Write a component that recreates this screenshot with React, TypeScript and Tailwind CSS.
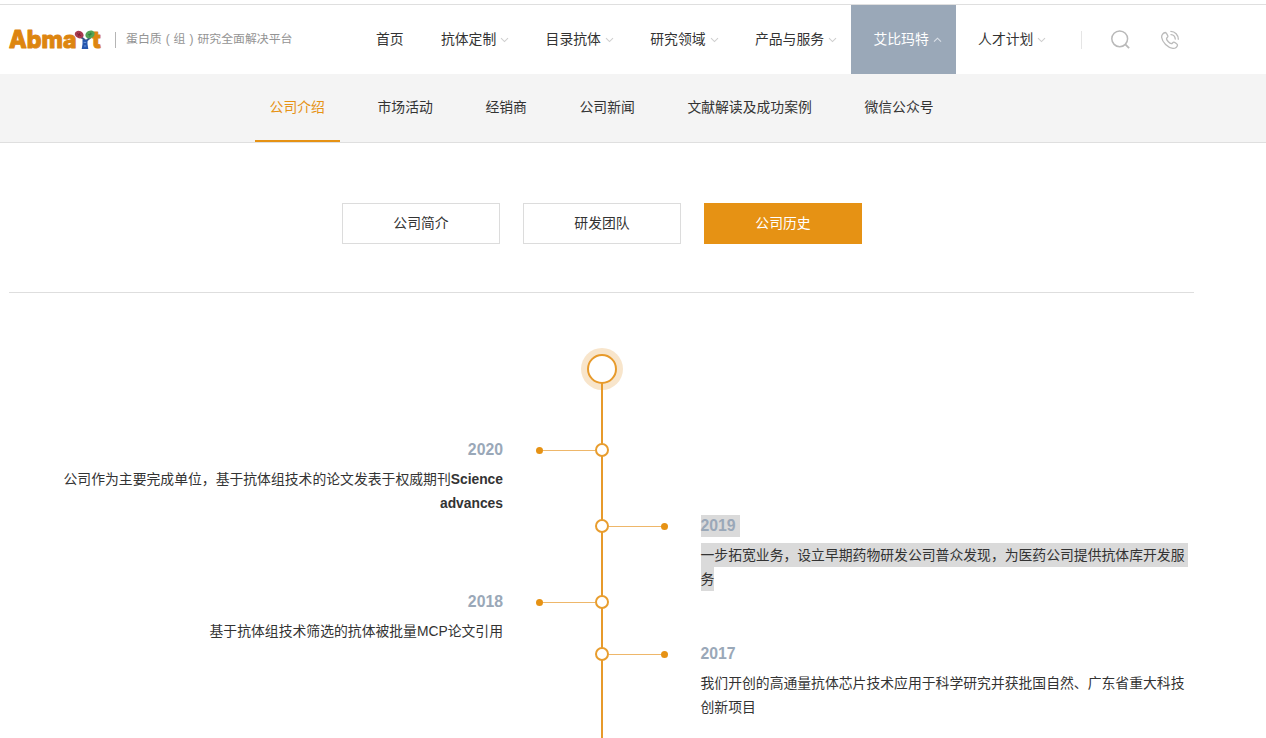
import React from "react";
import clsx from "clsx";

interface NavItem {
  label: string;
  menu?: boolean;
  active?: boolean;
}

interface TimelineEntry {
  year: string;
  side: "left" | "right";
  lines: React.ReactNode[];
  selected?: boolean;
}

const navItems: NavItem[] = [
  { label: "首页" },
  { label: "抗体定制", menu: true },
  { label: "目录抗体", menu: true },
  { label: "研究领域", menu: true },
  { label: "产品与服务", menu: true },
  { label: "艾比玛特", menu: true, active: true },
  { label: "人才计划", menu: true },
];

const subItems = ["公司介绍", "市场活动", "经销商", "公司新闻", "文献解读及成功案例", "微信公众号"];

const tabs = ["公司简介", "研发团队", "公司历史"];

const entries: TimelineEntry[] = [
  {
    year: "2020",
    side: "left",
    lines: [
      <>
        公司作为主要完成单位，基于抗体组技术的论文发表于权威期刊<b>Science</b>
      </>,
      <b>advances</b>,
    ],
  },
  {
    year: "2019",
    side: "right",
    selected: true,
    lines: ["一步拓宽业务，设立早期药物研发公司普众发现，为医药公司提供抗体库开发服", "务"],
  },
  { year: "2018", side: "left", lines: ["基于抗体组技术筛选的抗体被批量MCP论文引用"] },
  {
    year: "2017",
    side: "right",
    lines: ["我们开创的高通量抗体芯片技术应用于科学研究并获批国自然、广东省重大科技", "创新项目"],
  },
];

const Logo = () => (
  <svg width="96" height="36" viewBox="0 -4 96 36" className="shrink-0">
    <g
      fill="#dd8510"
      stroke="#dd8510"
      strokeWidth="1"
      strokeLinejoin="round"
      fontFamily="Inter, sans-serif"
      fontWeight="800"
      fontSize="24"
    >
      <text x="1" y="22.2" textLength="67.5" lengthAdjust="spacingAndGlyphs">Abma</text>
      <text x="84" y="22.2" textLength="8.800" lengthAdjust="spacingAndGlyphs">t</text>
    </g>
    {/* antibody figure standing in for the "r" */}
    <path d="M73 11l5 4M83 11l-5 4" stroke="#3a5a8a" strokeWidth="2.2" />
    <ellipse cx="71.2" cy="8.6" rx="4.6" ry="3.6" fill="#a83a4e" transform="rotate(25 71.2 8.6)" />
    <ellipse cx="82" cy="8.4" rx="4.8" ry="3.8" fill="#54a355" transform="rotate(-25 82 8.4)" />
    <path d="M69 7.6l4 2M70.4 10.4l1.6-3.6" stroke="#7a2036" strokeWidth="0.9" />
    <path d="M80 8.8l4.2-1M81.6 10.6l1-4" stroke="#2f7a3c" strokeWidth="0.9" />
    <path d="M74.500 14h5v4l.8 5h-6.600l.8-5z" fill="#2456ad" />
    <path d="M75.6 16.4h2.6M76 20h2.2" stroke="#7ba6e6" strokeWidth="0.8" />
  </svg>
);

const Chevron = ({ up }: { up?: boolean }) => (
  <svg
    width="9"
    height="6"
    viewBox="0 0 9 6"
    fill="none"
    stroke={up ? "#dbe1e8" : "#cfcfcf"}
    strokeWidth="1.1"
    className="ml-1 shrink-0"
  >
    <path d={up ? "M1 4.6L4.5 1.2L8 4.6" : "M1 1.2L4.5 4.6L8 1.2"} />
  </svg>
);

const SearchIcon = () => (
  <svg width="20" height="20" viewBox="0 0 20 20" fill="none" stroke="#b9b9b9" strokeWidth="1.5">
    <circle cx="8.7" cy="8.8" r="7.9" />
    <path d="M14.3 14.4l3.8 3.8" strokeWidth="1.8" />
  </svg>
);

const PhoneIcon = () => (
  <svg
    width="20"
    height="20"
    viewBox="0 0 24 24"
    fill="none"
    stroke="#bbb"
    strokeWidth="1.6"
    strokeLinecap="round"
    strokeLinejoin="round"
  >
    <path d="M6.5 3C4 3.3 1.6 6 2 9c1 6 7 12.3 13.5 13.1C18.5 22.4 21 20 21 18c0-.8-3.5-3.4-4.5-3.4-1.3 0-1.7 2-2.9 1.8C11.5 16 8 12.5 7.8 10.6 7.7 9.4 9.6 8.8 9.5 7.6 9.4 6.6 7.4 3 6.5 3z" />
    <path d="M13 1.6c5 0 9 4.4 9 9.4M13.2 5.6c3 .2 4.9 2.4 5.1 5.2" />
  </svg>
);

const Branch = ({ side }: { side: "left" | "right" }) => (
  <div className={clsx("flex h-6 items-center", side === "right" && "flex-row-reverse")}>
    <span className="size-[7px] rounded-full bg-[#e69214]" />
    <span className="h-px flex-1 bg-[#eeb76a]" />
  </div>
);

const EntryText = ({ entry }: { entry: TimelineEntry }) => (
  <div className={clsx("-mb-px flex flex-col", entry.side === "left" ? "items-end" : "items-start")}>
    <div className="mb-1.5 flex h-[23px] items-end text-[15.8px] font-bold text-[#9aa8b8]">
      <span className={clsx("leading-[22px]", entry.selected && "bg-[#dadada] pr-1")}>{entry.year}</span>
    </div>
    {entry.lines.map((line, i) => (
      <p
        key={i}
        className={clsx(
          "whitespace-nowrap leading-6",
          entry.selected && "bg-[#dadada]",
          entry.selected && i === 0 && "pr-1"
        )}
      >
        {line}
      </p>
    ))}
  </div>
);

const TimelineRow = ({ entry }: { entry: TimelineEntry }) => (
  <div className="grid grid-cols-[494px_33px_59px_14px_59px_32.5px_493.5px]">
    <div>{entry.side === "left" && <EntryText entry={entry} />}</div>
    <span />
    <div>{entry.side === "left" && <Branch side="left" />}</div>
    <div className="relative flex h-6 items-center">
      <span className="size-3.5 rounded-full border-2 border-[#e89d2e] bg-white" />
    </div>
    <div>{entry.side === "right" && <Branch side="right" />}</div>
    <span />
    <div>{entry.side === "right" && <EntryText entry={entry} />}</div>
  </div>
);

export default function App() {
  return (
    <div className="h-[738px] w-[1266px] overflow-hidden bg-white pt-1 font-['Liberation_Sans','Noto_Sans_CJK_SC',sans-serif] text-[13.83px] text-[#333]">
      <header className="flex h-[70px] border-t border-[#dfdfdf]">
        <div className="flex w-[354px] items-center pl-2">
          <Logo />
          <span className="ml-[11px] h-4 w-px bg-[#b5b5b5]" />
          <span className="ml-2.5 whitespace-nowrap text-[11.9px] text-[#949494]">
            蛋白质<span className="inline-block w-[11.9px] text-center">(</span>组
            <span className="inline-block w-[11.9px] text-center">)</span>研究全面解决平台
          </span>
        </div>
        <nav className="flex">
          {navItems.map((item) => (
            <a
              key={item.label}
              className={clsx(
                "flex items-center whitespace-nowrap pl-[22px]",
                item.menu ? "pr-[14.35px]" : "pr-[15.3px]",
                item.active && "bg-[#9aa8b8] text-white"
              )}
            >
              {item.label}
              {item.menu && <Chevron up={item.active} />}
            </a>
          ))}
        </nav>
        <div className="flex items-center pl-5">
          <span className="h-[18px] w-px bg-[#e5e5e5]" />
          <button className="ml-[29px]">
            <SearchIcon />
          </button>
          <button className="ml-[29px]">
            <PhoneIcon />
          </button>
        </div>
      </header>

      <div className="flex h-[69px] gap-[22.6px] border-b border-[#dfdfdf] bg-[#f4f4f4] pl-[254.6px]">
        {subItems.map((item, i) => (
          <a
            key={item}
            className={clsx(
              "flex items-center border-b-2 px-[15px]",
              i === 0 ? "border-[#e69214] text-[#e69214]" : "border-transparent"
            )}
          >
            {item}
          </a>
        ))}
      </div>

      <main className="ml-[9px] w-[1185px]">
        <div className="flex h-[150px] gap-[23px] border-b border-[#dedede] pl-[333px] pt-[60px]">
          {tabs.map((tab, i) => (
            <button
              key={tab}
              className={clsx(
                "h-[41px] w-[158px] border",
                i === 2 ? "border-[#e69214] bg-[#e69214] text-white" : "border-[#dcdcdc]"
              )}
            >
              {tab}
            </button>
          ))}
        </div>

        <section className="relative pt-[55px]">
          <div className="mx-auto flex size-[42px] items-center justify-center rounded-full bg-[#f8e5cb]">
            <span className="size-[30px] rounded-full border-2 border-[#e79a2b] bg-white" />
          </div>
          <span className="absolute left-1/2 top-[90px] h-[400px] w-0.5 -translate-x-1/2 bg-[#e79a2b]" />
          <div className="mt-12">
            {entries.map((entry) => (
              <TimelineRow key={entry.year} entry={entry} />
            ))}
          </div>
        </section>
      </main>
    </div>
  );
}
